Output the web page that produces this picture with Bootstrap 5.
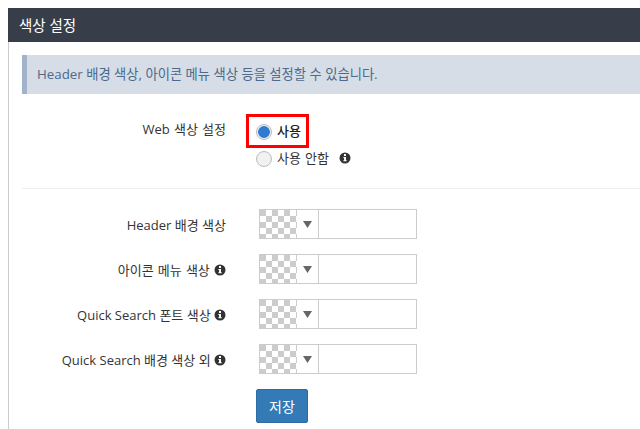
<!DOCTYPE html>
<html lang="ko">
<head>
    <meta charset="UTF-8">
    <title>색상 설정</title>
    <link href="https://cdn.jsdelivr.net/npm/bootstrap@5.3.0/dist/css/bootstrap.min.css" rel="stylesheet">
    <style>
        html, body { height: 100%; overflow: hidden; }
        body { font-family: "Open Sans", "Noto Sans CJK KR", sans-serif; font-size: 13px; color: #333; background: #fff; padding: 8px 0 0 8px; }
        .page-box { border-left: 1px solid #ccc; height: 100%; }
        .page-head { background: #373e4a; color: #fff; height: 34px; line-height: 36px; padding-left: 11px; font-size: 14.5px; margin-left: -1px; }
        .page-body { padding: 13px 0 0 13px; }
        .note { background: #d6dde7; border-left: 5px solid #a0b3c8; color: #4c6a8c; height: 39px; line-height: 38px; padding-left: 10px; margin-bottom: 20px; font-size: 13.3px; }
        .field-label { width: 204px; text-align: right; padding-top: 6px; flex-shrink: 0; }
        .wide-words { word-spacing: .8px; }
        .radio-col { margin-left: 30px; margin-top: 4px; position: relative; }
        .radio-row { height: 27px; display: flex; align-items: center; gap: 5px; }
        .radio-row input { appearance: none; width: 16px; height: 16px; border-radius: 50%; border: 1px solid #bbb; background: #f1f1f1; margin: 0; }
        .radio-row input:checked { background: radial-gradient(circle, #2f7bd0 0 5.5px, #f1f1f1 6.2px); }
        .on-text { font-weight: 500; color: #222; }
        .mark-box { position: absolute; left: -10px; top: -4px; width: 63px; height: 34px; border: 3px solid #f00; }
        .divider { border-top: 1px solid #eee; margin: 16px 0 20px 0; }
        .color-row { height: 30px; margin-bottom: 15px; }
        .color-row .field-label { padding-top: 7px; }
        .picker { margin-left: 33px; width: 158px; height: 30px; border: 1px solid #ccc; display: flex; }
        .swatch { width: 37px; background: repeating-conic-gradient(#fff 0 25%, #ccc 0 50%) 0 0 / 12px 12px; }
        .drop { width: 22px; border-right: 1px solid #ccc; display: flex; align-items: center; justify-content: center; padding-top: 1px; }
        .drop svg { display: block; }
        .info-ic { vertical-align: -1px; }
        .gap-ic { margin-left: 6px; }
        .save-btn { margin-left: 30px; width: 52px; height: 34px; background: #337ab7; border: 1px solid #2e6da4; color: #fff; border-radius: 2px; font-size: 14px; padding: 0; }
    </style>
</head>
<body>
    <div class="page-box">
        <div class="page-head">색상 설정</div>
        <div class="page-body">
            <div class="note">Header 배경 색상, 아이콘 메뉴 색상 등을 설정할 수 있습니다.</div>

            <div class="d-flex">
                <div class="field-label wide-words">Web 색상 설정</div>
                <div class="radio-col">
                    <div class="mark-box"></div>
                    <label class="radio-row"><input type="radio" name="web" checked> <span class="on-text">사용</span></label>
                    <label class="radio-row"><input type="radio" name="web"> <span class="wide-words">사용 안함 <svg class="info-ic gap-ic" width="12" height="12" viewBox="0 0 12 12"><circle cx="6" cy="6" r="5.5" fill="#333"/><rect x="5" y="2" width="2" height="2" fill="#fff"/><path d="M4.4 5h2.6v3.2h.7v1H4.4v-1h.7V6h-.7z" fill="#fff"/></svg></span></label>
                </div>
            </div>

            <div class="divider"></div>

            <div class="d-flex color-row">
                <div class="field-label">Header 배경 색상</div>
                <div class="picker"><div class="swatch"></div><div class="drop"><svg width="9" height="7" viewBox="0 0 9 7"><path d="M0 0h9L4.5 7z" fill="#666"/></svg></div></div>
            </div>
            <div class="d-flex color-row">
                <div class="field-label wide-words">아이콘 메뉴 색상 <svg class="info-ic" width="12" height="12" viewBox="0 0 12 12"><circle cx="6" cy="6" r="5.5" fill="#333"/><rect x="5" y="2" width="2" height="2" fill="#fff"/><path d="M4.4 5h2.6v3.2h.7v1H4.4v-1h.7V6h-.7z" fill="#fff"/></svg></div>
                <div class="picker"><div class="swatch"></div><div class="drop"><svg width="9" height="7" viewBox="0 0 9 7"><path d="M0 0h9L4.5 7z" fill="#666"/></svg></div></div>
            </div>
            <div class="d-flex color-row">
                <div class="field-label">Quick Search 폰트 색상 <svg class="info-ic" width="12" height="12" viewBox="0 0 12 12"><circle cx="6" cy="6" r="5.5" fill="#333"/><rect x="5" y="2" width="2" height="2" fill="#fff"/><path d="M4.4 5h2.6v3.2h.7v1H4.4v-1h.7V6h-.7z" fill="#fff"/></svg></div>
                <div class="picker"><div class="swatch"></div><div class="drop"><svg width="9" height="7" viewBox="0 0 9 7"><path d="M0 0h9L4.5 7z" fill="#666"/></svg></div></div>
            </div>
            <div class="d-flex color-row">
                <div class="field-label">Quick Search 배경 색상 외 <svg class="info-ic" width="12" height="12" viewBox="0 0 12 12"><circle cx="6" cy="6" r="5.5" fill="#333"/><rect x="5" y="2" width="2" height="2" fill="#fff"/><path d="M4.4 5h2.6v3.2h.7v1H4.4v-1h.7V6h-.7z" fill="#fff"/></svg></div>
                <div class="picker"><div class="swatch"></div><div class="drop"><svg width="9" height="7" viewBox="0 0 9 7"><path d="M0 0h9L4.5 7z" fill="#666"/></svg></div></div>
            </div>

            <div class="d-flex">
                <div class="field-label"></div>
                <button type="button" class="save-btn">저장</button>
            </div>
        </div>
    </div>
    <script src="https://cdn.jsdelivr.net/npm/bootstrap@5.3.0/dist/js/bootstrap.bundle.min.js"></script>
</body>
</html>
